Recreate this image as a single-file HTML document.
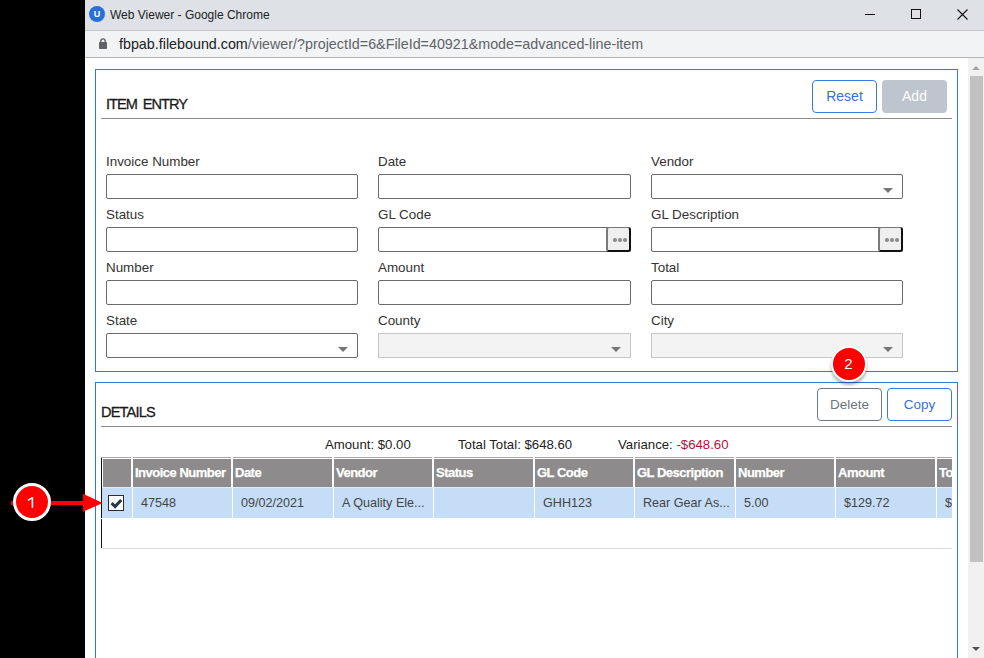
<!DOCTYPE html>
<html><head><meta charset="utf-8">
<style>
*{box-sizing:border-box;margin:0;padding:0}
html,body{width:984px;height:658px;overflow:hidden;background:#000;font-family:"Liberation Sans",sans-serif;white-space:nowrap}
.abs{position:absolute}
#win{position:absolute;left:85px;top:0;width:899px;height:658px;background:#fff}
#title{position:absolute;left:0;top:0;width:899px;height:31px;background:#dee1e6;border-bottom:1px solid #c4c6ca}
#addr{position:absolute;left:0;top:31px;width:899px;height:27px;background:#f1f3f4;border-bottom:1px solid #b4b6b8}
.panel{position:absolute;border:1px solid #2f7ae0;background:#fff}
.lbl{position:absolute;font-size:13.4px;color:#333;margin-top:1px}
.inp{position:absolute;width:252px;height:25px;border:1px solid #6b6b6b;border-radius:2px;background:#fff}
.dis{background:#f3f3f3;border-color:#c6c6c6;border-radius:0}
.caret{position:absolute;right:9px;top:13px;width:0;height:0;border-left:5px solid transparent;border-right:5px solid transparent;border-top:5px solid #777}
.dots{position:absolute;right:-1px;top:-1px;width:25px;height:25px;background:#efefef;border-left:2px solid #7a7a7a;border-top:1px solid #777;border-right:2px solid #111;border-bottom:2px solid #111;border-radius:3px}
.dots i{position:absolute;top:10.2px;width:3.6px;height:3.6px;border-radius:50%;background:#8c8c8c}
.btn{position:absolute;font-size:14px;text-align:center;border-radius:4px;height:33px;line-height:31px}
.hdr{position:absolute;font-size:14.6px;color:#1a1a1a;letter-spacing:-0.95px;word-spacing:2.5px;-webkit-text-stroke:0.3px #1a1a1a;margin-top:0.5px}
.rule{position:absolute;height:1px;background:#8a8a8a}
.th{position:absolute;top:459px;height:28px;-webkit-text-stroke:0.25px #fff;background:#8d8b8b;color:#fff;font-weight:bold;font-size:13px;letter-spacing:-0.5px;line-height:28px;padding-left:2px;overflow:hidden}
.td{position:absolute;top:488px;height:30px;background:#c5ddf6;color:#444;font-size:12.6px;line-height:30px;padding-left:8px;overflow:hidden}
.badge{position:absolute;width:38px;height:38px;border-radius:50%;background:#f00;border:3px solid #fff;color:#fff;font-size:18px;text-align:center;line-height:32px}
</style></head><body>
<div id="win">
  <div id="title">
    <div class="abs" style="left:4px;top:6px;width:16px;height:16px;border-radius:50%;background:#2a6fd8;color:#fff;font-weight:bold;font-size:9px;text-align:center;line-height:17px">U</div>
    <div class="abs" style="left:25px;top:8px;font-size:12px;color:#202124">Web Viewer - Google Chrome</div>
    <div class="abs" style="left:780px;top:14px;width:10px;height:1px;background:#111"></div>
    <div class="abs" style="left:826px;top:9px;width:10px;height:10px;border:1px solid #111"></div>
    <svg class="abs" style="left:872px;top:9px" width="11" height="11" viewBox="0 0 11 11"><path d="M0.5 0.5L10.5 10.5M10.5 0.5L0.5 10.5" stroke="#111" stroke-width="1.1"/></svg>
  </div>
  <div id="addr">
    <svg class="abs" style="left:14px;top:7px" width="8" height="11" viewBox="0 0 8 11"><path d="M1.8 4.5V3.1a2.2 2.2 0 0 1 4.4 0V4.5" fill="none" stroke="#5f6368" stroke-width="1.4"/><rect x="0" y="4" width="8" height="7" rx="0.8" fill="#5f6368"/></svg>
    <div class="abs" style="left:34px;top:5px;font-size:14.3px;color:#5f6368"><span style="color:#202124">fbpab.filebound.com</span>/viewer/?projectId=6&amp;FileId=40921&amp;mode=advanced-line-item</div>
  </div>
  <!-- scrollbar -->
  <div class="abs" style="left:883px;top:58px;width:16px;height:600px;background:#f1f1f1"></div>
  <div class="abs" style="left:887px;top:66px;width:0;height:0;border-left:4px solid transparent;border-right:4px solid transparent;border-bottom:4px solid #a3a3a3"></div>
  <div class="abs" style="left:885px;top:76px;width:13px;height:486px;background:#c1c1c1"></div>
  <div class="abs" style="left:887px;top:647px;width:0;height:0;border-left:4px solid transparent;border-right:4px solid transparent;border-top:4px solid #505050"></div>
</div>

<!-- item entry panel -->
<div class="panel" style="left:95px;top:69px;width:863px;height:303px"></div>
<div class="hdr" style="left:106px;top:95px">ITEM ENTRY</div>
<div class="rule" style="left:101px;top:118px;width:851px"></div>
<div class="btn" style="left:812px;top:80px;width:65px;border:1px solid #3a7be0;color:#3a6fd8">Reset</div>
<div class="btn" style="left:882px;top:80px;width:65px;background:#bec5ce;color:#fff;line-height:33px">Add</div>

<div class="lbl" style="left:106px;top:153px">Invoice Number</div>
<div class="inp" style="left:106px;top:174px"></div>
<div class="lbl" style="left:378px;top:153px">Date</div>
<div class="inp" style="left:378px;top:174px;width:253px"></div>
<div class="lbl" style="left:651px;top:153px">Vendor</div>
<div class="inp" style="left:651px;top:174px"><div class="caret"></div></div>

<div class="lbl" style="left:106px;top:206px">Status</div>
<div class="inp" style="left:106px;top:227px"></div>
<div class="lbl" style="left:378px;top:206px">GL Code</div>
<div class="inp" style="left:378px;top:227px;width:253px"><div class="dots"><i style="left:5px"></i><i style="left:10px"></i><i style="left:15px"></i></div></div>
<div class="lbl" style="left:651px;top:206px">GL Description</div>
<div class="inp" style="left:651px;top:227px"><div class="dots"><i style="left:5px"></i><i style="left:10px"></i><i style="left:15px"></i></div></div>

<div class="lbl" style="left:106px;top:259px">Number</div>
<div class="inp" style="left:106px;top:280px"></div>
<div class="lbl" style="left:378px;top:259px">Amount</div>
<div class="inp" style="left:378px;top:280px;width:253px"></div>
<div class="lbl" style="left:651px;top:259px">Total</div>
<div class="inp" style="left:651px;top:280px"></div>

<div class="lbl" style="left:106px;top:312px">State</div>
<div class="inp" style="left:106px;top:333px"><div class="caret"></div></div>
<div class="lbl" style="left:378px;top:312px">County</div>
<div class="inp dis" style="left:378px;top:333px;width:253px"><div class="caret"></div></div>
<div class="lbl" style="left:651px;top:312px">City</div>
<div class="inp dis" style="left:651px;top:333px"><div class="caret"></div></div>

<!-- details panel -->
<div class="panel" style="left:95px;top:382px;width:863px;height:300px"></div>
<div class="hdr" style="left:101px;top:403px;letter-spacing:-0.85px">DETAILS</div>
<div class="rule" style="left:101px;top:426px;width:851px"></div>
<div class="btn" style="left:817px;top:388px;width:65px;border:1px solid #6c7886;color:#6c757d;font-size:13.5px">Delete</div>
<div class="btn" style="left:887px;top:388px;width:65px;border:1px solid #3a7be0;color:#3a6fd8;font-size:13.5px">Copy</div>

<div class="abs" style="left:325px;top:437px;font-size:13.2px;color:#222">Amount: $0.00</div>
<div class="abs" style="left:458px;top:437px;font-size:13.2px;color:#222">Total Total: $648.60</div>
<div class="abs" style="left:618px;top:437px;font-size:13.2px;color:#222">Variance: <span style="color:#b5103c">-$648.60</span></div>

<!-- table -->
<div class="abs" style="left:101px;top:457px;width:851px;height:1px;background:#a9a9a9"></div>
<div class="abs" style="left:131px;top:457px;width:2px;height:1px;background:#fff"></div>
<div class="abs" style="left:231px;top:457px;width:2px;height:1px;background:#fff"></div>
<div class="abs" style="left:332px;top:457px;width:2px;height:1px;background:#fff"></div>
<div class="abs" style="left:432px;top:457px;width:2px;height:1px;background:#fff"></div>
<div class="abs" style="left:533px;top:457px;width:2px;height:1px;background:#fff"></div>
<div class="abs" style="left:633px;top:457px;width:2px;height:1px;background:#fff"></div>
<div class="abs" style="left:734px;top:457px;width:2px;height:1px;background:#fff"></div>
<div class="abs" style="left:834px;top:457px;width:2px;height:1px;background:#fff"></div>
<div class="abs" style="left:935px;top:457px;width:2px;height:1px;background:#fff"></div>
<div class="abs" style="left:101px;top:458px;width:1px;height:60px;background:#111"></div>
<div class="abs" style="left:101px;top:519px;width:1px;height:29px;background:#111"></div>
<div class="abs" style="left:102px;top:548px;width:850px;height:1px;background:#dcdcdc"></div>
<div class="abs" style="left:103px;top:487px;width:849px;height:1px;background:#e6eaee"></div>
<div class="th" style="left:103px;width:28px"></div>
<div class="th" style="left:133px;width:98px">Invoice Number</div>
<div class="th" style="left:233px;width:99px">Date</div>
<div class="th" style="left:334px;width:98px">Vendor</div>
<div class="th" style="left:434px;width:99px">Status</div>
<div class="th" style="left:535px;width:98px">GL Code</div>
<div class="th" style="left:635px;width:99px">GL Description</div>
<div class="th" style="left:736px;width:98px">Number</div>
<div class="th" style="left:836px;width:99px">Amount</div>
<div class="th" style="left:937px;width:15px">Total</div>
<div class="td" style="left:102px;width:30px"></div>
<div class="td" style="left:133px;width:99px">47548</div>
<div class="td" style="left:233px;width:100px">09/02/2021</div>
<div class="td" style="left:334px;width:99px">A Quality Ele...</div>
<div class="td" style="left:434px;width:100px"></div>
<div class="td" style="left:535px;width:99px">GHH123</div>
<div class="td" style="left:635px;width:100px">Rear Gear As...</div>
<div class="td" style="left:736px;width:99px">5.00</div>
<div class="td" style="left:836px;width:100px">$129.72</div>
<div class="td" style="left:937px;width:15px">$129.72</div>

<!-- checkbox -->
<div class="abs" style="left:108px;top:495px;width:16px;height:16px;border:1.5px solid #2b2b2b;background:#fff"></div>
<svg class="abs" style="left:108px;top:495px" width="16" height="16" viewBox="0 0 16 16"><path d="M3.6 8.2L7.1 11.6L13.2 5" fill="none" stroke="#263746" stroke-width="3" stroke-linecap="butt" stroke-linejoin="miter"/></svg>

<!-- annotations -->
<div class="abs" style="left:11px;top:501px;width:73px;height:4px;background:#f00"></div>
<svg class="abs" style="left:83px;top:493px" width="20" height="19" viewBox="0 0 20 19"><path d="M0 0.8L19.6 10L0 18.8Z" fill="#f00"/></svg>
<div class="badge" style="left:12.7px;top:483.4px"></div>
<svg class="abs" style="left:26px;top:496px" width="9" height="13" viewBox="0 0 9 13"><rect x="5.6" y="1.1" width="1.6" height="10.7" fill="#fff"/><path d="M6.6 1.6L1.9 4.3" stroke="#fff" stroke-width="1.5"/></svg>
<div class="badge" style="left:830.5px;top:345.9px;width:36px;height:36px;border-width:2px;font-size:15px;line-height:31.5px;box-shadow:0 3px 3px rgba(0,0,0,0.3)">2</div>

</body></html>
